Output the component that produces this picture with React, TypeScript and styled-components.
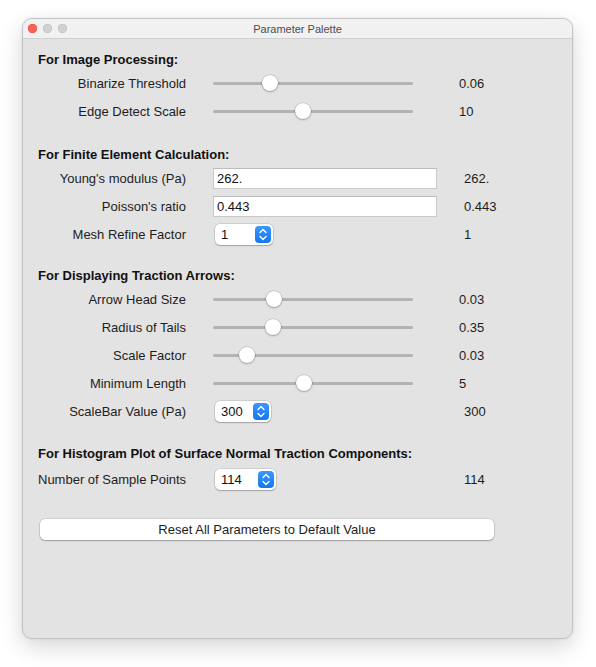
import React from 'react'
import styled, { createGlobalStyle } from 'styled-components'

const GlobalStyle = createGlobalStyle`
  html, body {
    margin: 0;
    padding: 0;
    background: #ffffff;
  }
  body {
    font-family: 'Liberation Sans', Arial, sans-serif;
    font-size: 13px;
    color: #1d1d1d;
  }
`

const Page = styled.div`
  width: 596px;
  height: 667px;
  padding: 18px 0 0 22px;
  box-sizing: border-box;
`

const Window = styled.div`
  width: 551px;
  height: 621px;
  box-sizing: border-box;
  border: 1px solid #c4c4c4;
  border-radius: 10px;
  background: #e3e3e3;
  overflow: hidden;
  display: flex;
  flex-direction: column;
  box-shadow: 0 8px 22px rgba(0, 0, 0, 0.16), 0 0 3px rgba(0, 0, 0, 0.08);
`

const TitleBar = styled.div`
  position: relative;
  height: 19px;
  flex: none;
  background: #f1f1f1;
  border-bottom: 1px solid #cfcfcf;
  display: flex;
  align-items: center;
  justify-content: center;
  font-size: 11px;
  color: #4c4c4c;
`

const Lights = styled.div`
  position: absolute;
  left: 5px;
  top: 5px;
  display: flex;
  gap: 6px;
`

const Light = styled.span<{ $color: string; $edge: string }>`
  width: 9px;
  height: 9px;
  border-radius: 50%;
  background: ${({ $color }) => $color};
  box-shadow: inset 0 0 0 0.5px ${({ $edge }) => $edge};
`

const Body = styled.div`
  padding: 12px 0 0 15px;
  display: flex;
  flex-direction: column;
`

const Section = styled.div<{ $gap?: number }>`
  display: flex;
  flex-direction: column;
  margin-bottom: ${({ $gap }) => $gap ?? 20}px;
`

const Heading = styled.div<{ $after?: number }>`
  height: 18px;
  line-height: 18px;
  font-weight: bold;
  font-size: 13px;
  color: #111;
  margin-bottom: ${({ $after }) => $after ?? 0}px;
`

const Row = styled.div`
  height: 28px;
  display: grid;
  grid-template-columns: 148px 224px auto;
  column-gap: 27px;
  align-items: center;
`

const Label = styled.div<{ $left?: boolean }>`
  text-align: ${({ $left }) => ($left ? 'left' : 'right')};
  white-space: nowrap;
  color: #1d1d1d;
`

const Value = styled.div<{ $shift?: number }>`
  margin-left: ${({ $shift }) => $shift ?? 0}px;
  color: #1d1d1d;
`

const Track = styled.div`
  position: relative;
  width: 200px;
  height: 3px;
  border-radius: 2px;
  background: #b3b3b3;
`

const Thumb = styled.span`
  position: absolute;
  top: -7px;
  width: 16px;
  height: 16px;
  margin-left: -8px;
  border-radius: 50%;
  background: #ffffff;
  box-shadow: 0 0 0 0.5px rgba(0, 0, 0, 0.22), 0 1px 2px rgba(0, 0, 0, 0.25);
`

const Field = styled.div`
  height: 21px;
  box-sizing: border-box;
  background: #ffffff;
  border: 1px solid #c9c9c9;
  border-top-color: #bdbdbd;
  padding: 0 3px;
  line-height: 19px;
  font-size: 13px;
  color: #111;
`

const Popup = styled.div<{ $width: number }>`
  width: ${({ $width }) => $width}px;
  height: 21px;
  margin-left: 2px;
  box-sizing: border-box;
  background: #ffffff;
  border-radius: 5px;
  box-shadow: 0 0 0 0.5px rgba(0, 0, 0, 0.18), 0 1px 1.5px rgba(0, 0, 0, 0.22);
  display: flex;
  align-items: center;
  justify-content: space-between;
  padding: 0 2px 0 6px;
  color: #111;
`

const Stepper = styled.span`
  width: 16px;
  height: 17px;
  border-radius: 4px;
  background: linear-gradient(#3b97fd, #1478f5);
  display: flex;
  align-items: center;
  justify-content: center;
`

const ResetButton = styled.button`
  margin: 26px 0 0 2px;
  width: 454px;
  height: 21px;
  border: none;
  border-radius: 5px;
  background: #ffffff;
  font-family: 'Liberation Sans', Arial, sans-serif;
  font-size: 13px;
  color: #1d1d1d;
  padding: 0;
  box-shadow: 0 0 0 0.5px rgba(0, 0, 0, 0.16), 0 1px 1.5px rgba(0, 0, 0, 0.25);
`

function SliderRow({ label, at, value }: { label: string; at: number; value: string }) {
  return (
    <Row>
      <Label>{label}</Label>
      <Track>
        <Thumb style={{ left: at }} />
      </Track>
      <Value $shift={-5}>{value}</Value>
    </Row>
  )
}

function FieldRow({ label, value }: { label: string; value: string }) {
  return (
    <Row>
      <Label>{label}</Label>
      <Field>{value}</Field>
      <Value>{value}</Value>
    </Row>
  )
}

function PopupRow({ label, value, width, left }: { label: string; value: string; width: number; left?: boolean }) {
  return (
    <Row>
      <Label $left={left}>{label}</Label>
      <Popup $width={width}>
        <span>{value}</span>
        <Stepper>
          <svg width="10" height="13" viewBox="0 0 10 13" fill="none">
            <path d="M2 4.5 L5 1.5 L8 4.5" stroke="#fff" strokeWidth="1.4" strokeLinecap="round" strokeLinejoin="round" />
            <path d="M2 8.5 L5 11.5 L8 8.5" stroke="#fff" strokeWidth="1.4" strokeLinecap="round" strokeLinejoin="round" />
          </svg>
        </Stepper>
      </Popup>
      <Value>{value}</Value>
    </Row>
  )
}

export default function App() {
  return (
    <Page>
      <GlobalStyle />
      <Window>
        <TitleBar>
          <Lights>
            <Light $color="#fe5f57" $edge="#e0443e" />
            <Light $color="#d1d1d1" $edge="#bdbdbd" />
            <Light $color="#d1d1d1" $edge="#bdbdbd" />
          </Lights>
          Parameter Palette
        </TitleBar>
        <Body>
          <Section $gap={21}>
            <Heading>For Image Processing:</Heading>
            <SliderRow label="Binarize Threshold" at={57} value="0.06" />
            <SliderRow label="Edge Detect Scale" at={90} value="10" />
          </Section>
          <Section $gap={19}>
            <Heading>For Finite Element Calculation:</Heading>
            <FieldRow label="Young's modulus (Pa)" value="262." />
            <FieldRow label="Poisson's ratio" value="0.443" />
            <PopupRow label="Mesh Refine Factor" value="1" width={58} />
          </Section>
          <Section $gap={20}>
            <Heading>For Displaying Traction Arrows:</Heading>
            <SliderRow label="Arrow Head Size" at={61} value="0.03" />
            <SliderRow label="Radius of Tails" at={60} value="0.35" />
            <SliderRow label="Scale Factor" at={34} value="0.03" />
            <SliderRow label="Minimum Length" at={91} value="5" />
            <PopupRow label="ScaleBar Value (Pa)" value="300" width={56} />
          </Section>
          <Section $gap={0}>
            <Heading $after={2}>For Histogram Plot of Surface Normal Traction Components:</Heading>
            <PopupRow label="Number of Sample Points" value="114" width={61} left />
          </Section>
          <ResetButton>Reset All Parameters to Default Value</ResetButton>
        </Body>
      </Window>
    </Page>
  )
}
